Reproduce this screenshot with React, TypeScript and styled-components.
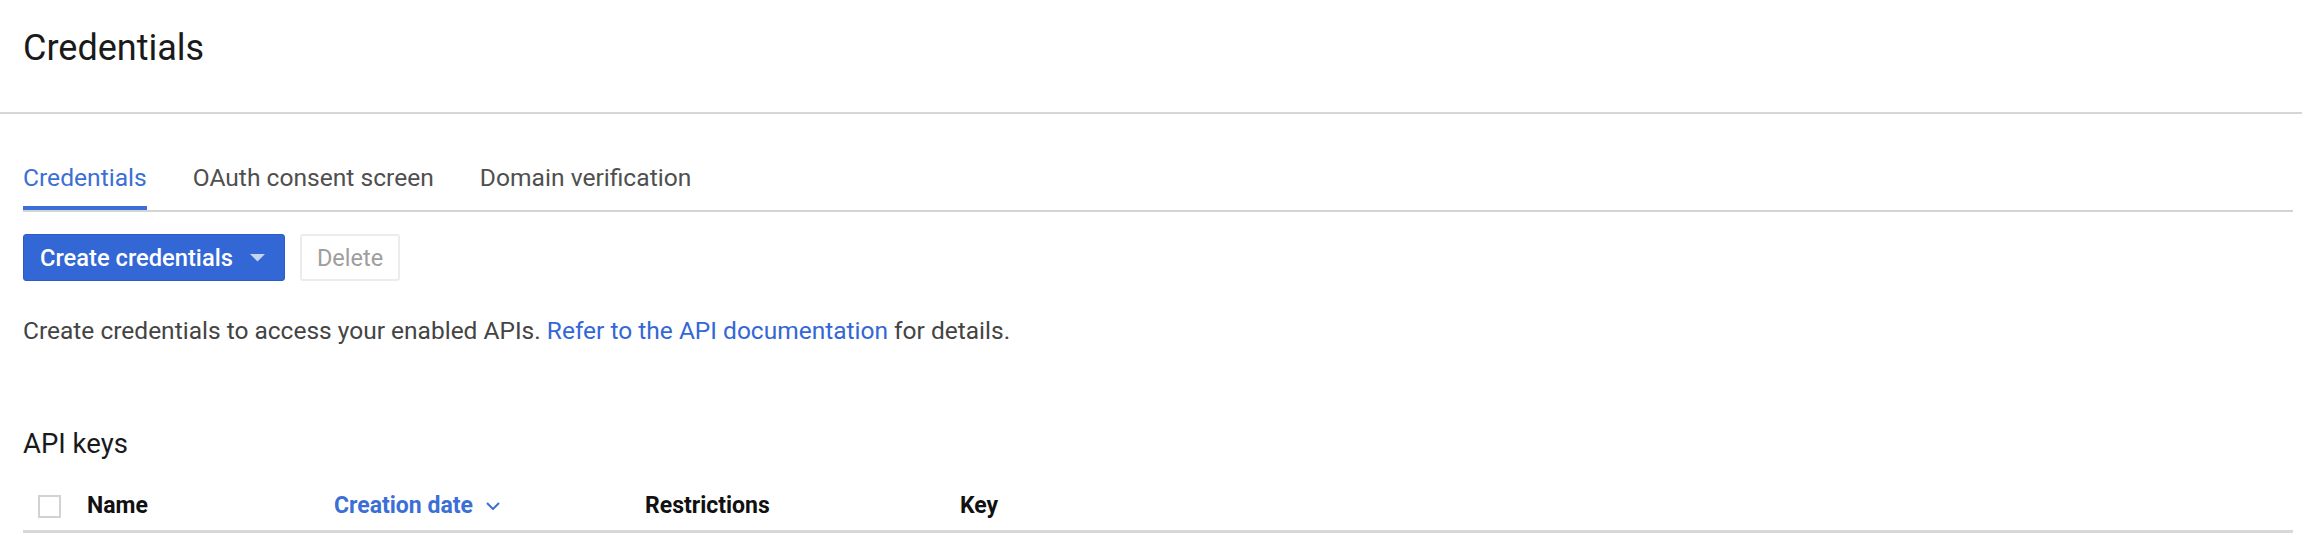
import React from "react";
import styled, { createGlobalStyle } from "styled-components";

const GlobalStyle = createGlobalStyle`
  html, body { margin: 0; padding: 0; background: #ffffff; }
  body { font-family: Roboto, "Liberation Sans", Arial, sans-serif; color: #212121; }
  * { box-sizing: border-box; }
`;

const Page = styled.div`
  width: 2302px;
  min-height: 536px;
  overflow: hidden;
`;

const Header = styled.header`
  padding: 27px 23px 43px;
  border-bottom: 2px solid #d6d6d6;
`;

const Title = styled.h1`
  margin: 0;
  font-size: 36px;
  line-height: 42px;
  font-weight: 400;
  color: #1a1a1a;
`;

const Main = styled.main`
  padding: 0 9px 0 23px;
`;

const Tabs = styled.nav`
  margin-top: 50px;
  display: flex;
  gap: 46px;
  border-bottom: 2px solid #d4d4d4;
`;

const Tab = styled.div<{ $active?: boolean }>`
  font-size: 24.6px;
  line-height: 28px;
  padding-bottom: 14px;
  border-bottom: 4px solid ${(p) => (p.$active ? "#3b6fd6" : "transparent")};
  color: ${(p) => (p.$active ? "#3b6fd6" : "#4f4f4f")};
  cursor: pointer;
`;

const Toolbar = styled.div`
  margin-top: 22px;
  display: flex;
  gap: 15px;
  align-items: flex-start;
`;

const PrimaryButton = styled.button`
  height: 47px;
  display: flex;
  align-items: center;
  gap: 17px;
  padding: 0 19px 0 16px;
  background: #3367d6;
  border: 1px solid #2b5cc4;
  border-radius: 3px;
  color: #ffffff;
  font-family: inherit;
  font-size: 23.7px;
  font-weight: 500;
`;

const SecondaryButton = styled.button<{ disabled?: boolean }>`
  height: 47px;
  padding: 0 15px;
  background: #ffffff;
  border: 2px solid #ececec;
  border-radius: 3px;
  color: #9e9e9e;
  font-family: inherit;
  font-size: 23.5px;
  font-weight: 400;
`;

const Description = styled.p`
  margin: 36px 0 0;
  font-size: 24.5px;
  line-height: 28px;
  color: #444444;
`;

const Link = styled.a`
  color: #3367d6;
  text-decoration: none;
`;

const SectionTitle = styled.h2`
  margin: 84px 0 0;
  font-size: 27.5px;
  line-height: 30px;
  font-weight: 400;
  color: #1a1a1a;
`;

const HeaderRow = styled.div`
  margin-top: 35px;
  display: grid;
  grid-template-columns: 49px 247px 311px 315px 1fr;
  align-items: center;
  padding: 0 0 12px 15px;
  border-bottom: 3px solid #d8d8d8;
`;

const Checkbox = styled.span`
  display: block;
  width: 23px;
  height: 23px;
  border: 2px solid #d2d2d2;
  background: #fff;
`;

const ColumnHead = styled.div<{ $sorted?: boolean }>`
  display: flex;
  align-items: center;
  gap: 13px;
  font-size: 23px;
  line-height: 24px;
  font-weight: 700;
  color: ${(p) => (p.$sorted ? "#3b6fd6" : "#111111")};
`;

const Caret = () => (
  <svg width="15" height="8" viewBox="0 0 15 8" aria-hidden="true">
    <path d="M0 0 L15 0 L7.5 7.5 Z" fill="rgba(255,255,255,0.72)" />
  </svg>
);

const Chevron = () => (
  <svg width="14" height="8" viewBox="0 0 14 8" aria-hidden="true">
    <path d="M1 1 L7 7 L13 1" fill="none" stroke="#3b6fd6" strokeWidth="2" />
  </svg>
);

export default function App() {
  return (
    <Page>
      <GlobalStyle />
      <Header>
        <Title>Credentials</Title>
      </Header>
      <Main>
        <Tabs>
          <Tab $active>Credentials</Tab>
          <Tab>OAuth consent screen</Tab>
          <Tab>Domain verification</Tab>
        </Tabs>
        <Toolbar>
          <PrimaryButton>
            Create credentials
            <Caret />
          </PrimaryButton>
          <SecondaryButton disabled>Delete</SecondaryButton>
        </Toolbar>
        <Description>
          Create credentials to access your enabled APIs.{" "}
          <Link href="#">Refer to the API documentation</Link> for details.
        </Description>
        <SectionTitle>API keys</SectionTitle>
        <HeaderRow>
          <Checkbox />
          <ColumnHead>Name</ColumnHead>
          <ColumnHead $sorted>
            Creation date
            <Chevron />
          </ColumnHead>
          <ColumnHead>Restrictions</ColumnHead>
          <ColumnHead>Key</ColumnHead>
        </HeaderRow>
      </Main>
    </Page>
  );
}
